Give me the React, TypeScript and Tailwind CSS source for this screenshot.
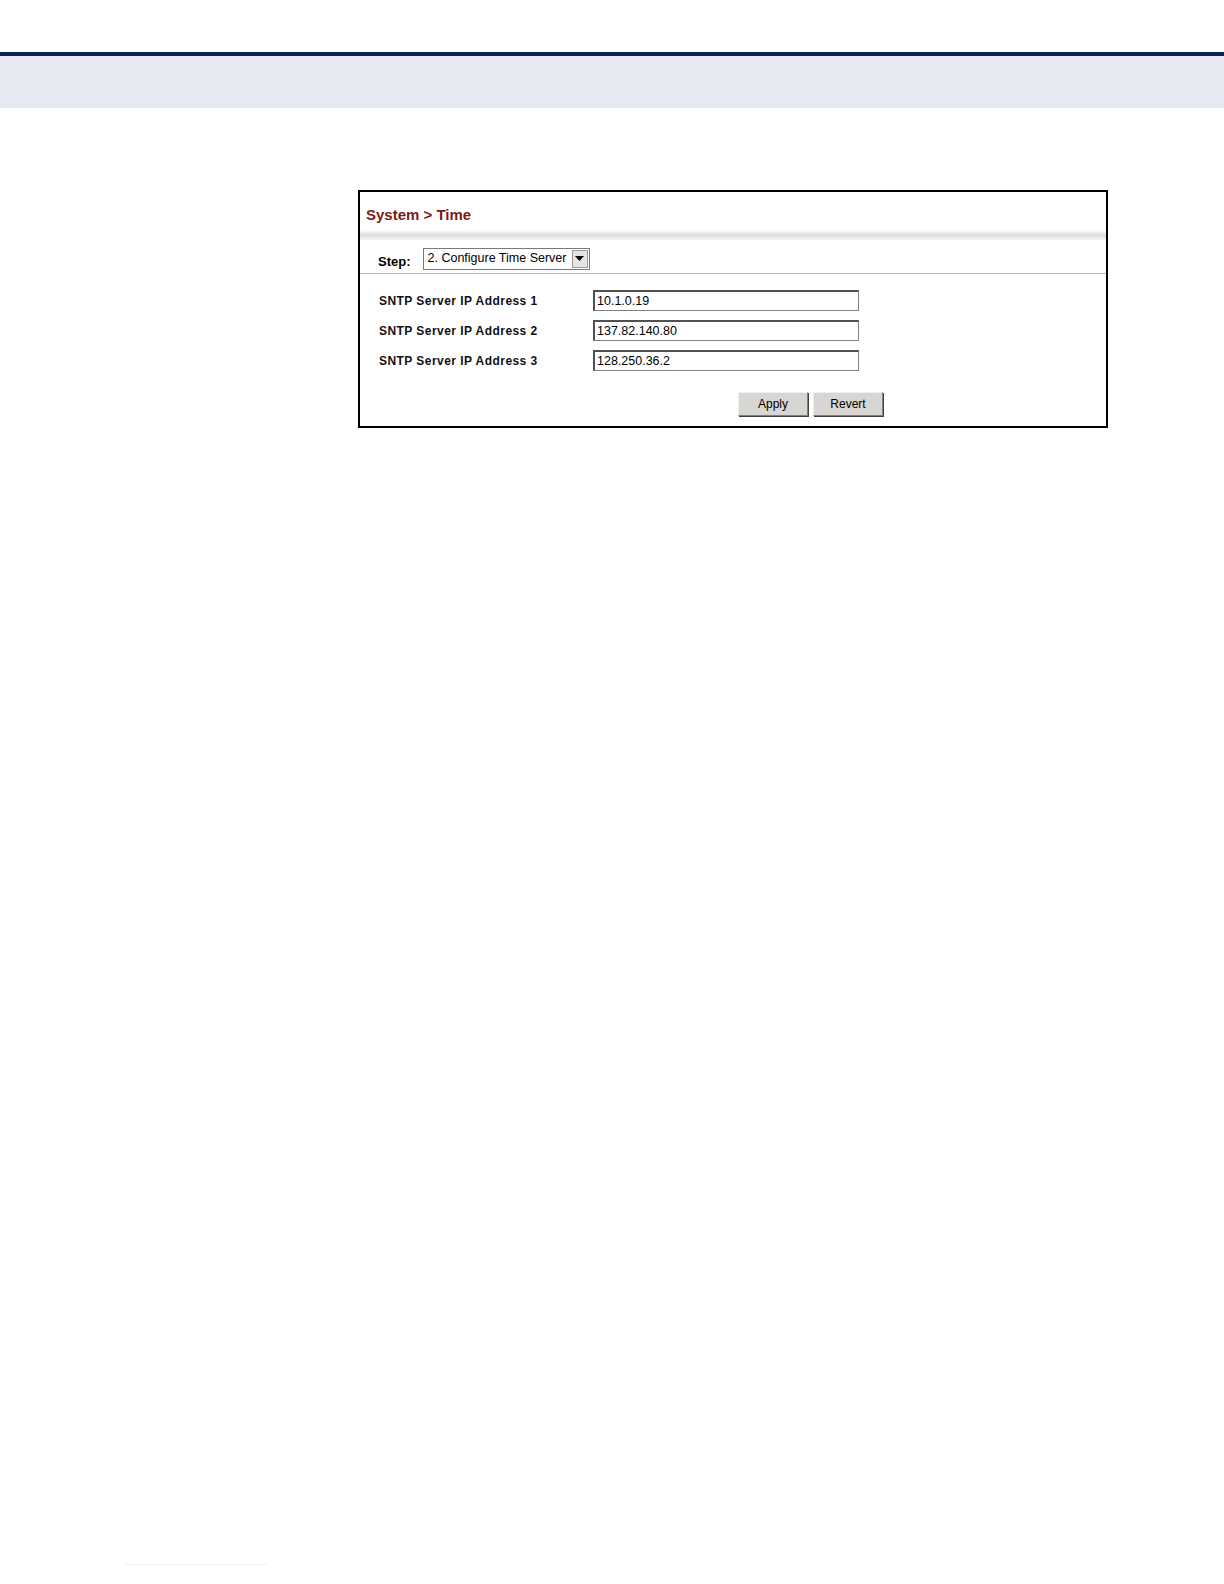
import React from 'react';

const SERVERS = [
  { label: 'SNTP Server IP Address 1', value: '10.1.0.19' },
  { label: 'SNTP Server IP Address 2', value: '137.82.140.80' },
  { label: 'SNTP Server IP Address 3', value: '128.250.36.2' },
];

export default function App() {
  return (
    <div className="w-[1224px] h-[1584px] bg-white relative" style={{ fontFamily: '"Liberation Sans", Arial, sans-serif' }}>
      {/* page header band */}
      <div className="h-[52px]" />
      <div className="h-[4px] bg-[#0b2457]" />
      <div className="h-[52px] bg-[#e6e9f1]" />

      {/* screenshot panel */}
      <div className="pt-[82px] pl-[358px]">
        <div className="w-[750px] h-[238px] border-2 border-black bg-white flex flex-col">
          <div className="pt-[14px] pl-[6px] text-[15px] font-bold text-[#7b1c1c] leading-[18px]">System &gt; Time</div>
          <div className="mt-[6px] h-[10px] bg-gradient-to-b from-[#ffffff] via-[#dcdcdc] to-[#f4f4f4]" />
          <div className="flex items-center h-[34px] pl-[18px] pt-[4px] border-b border-[#b4b4b4]">
            <span className="text-[13px] font-bold text-black mt-[6px]">Step:</span>
            <div className="ml-[12px] flex items-center h-[22px] w-[167px] border border-[#7a7a7a] bg-white">
              <span className="flex-1 pl-[4px] text-[12.5px] text-black leading-none whitespace-nowrap overflow-hidden">2. Configure Time Server</span>
              <div className="w-[16px] h-[18px] mr-[1px] bg-[#e4e4e4] border border-[#9a9a9a] flex items-center justify-center shrink-0">
                <svg width="9" height="5" viewBox="0 0 9 5"><path d="M0 0h9L4.5 5z" fill="#000" /></svg>
              </div>
            </div>
          </div>
          <div className="flex flex-col gap-[9px] pt-[16px]">
            {SERVERS.map((s) => (
              <div key={s.label} className="flex items-center h-[21px]">
                <span className="w-[233px] pl-[19px] text-[12px] font-bold text-[#111] tracking-[0.45px] whitespace-nowrap">{s.label}</span>
                <div className="w-[266px] h-[21px] border border-[#828282] border-t-2 border-l-2 border-t-[#505050] border-l-[#505050] bg-white flex items-center pl-[2px] text-[12.5px] text-black">
                  {s.value}
                </div>
              </div>
            ))}
          </div>
          <div className="flex gap-[5px] pl-[378px] pt-[21px]">
            <button className="w-[70px] h-[24px] bg-[#d8d6d2] border border-[#808080] border-t-[#f0f0f0] border-l-[#f0f0f0] shadow-[1px_1px_0_#404040] text-[12px] text-black">Apply</button>
            <button className="w-[70px] h-[24px] bg-[#d8d6d2] border border-[#808080] border-t-[#f0f0f0] border-l-[#f0f0f0] shadow-[1px_1px_0_#404040] text-[12px] text-black">Revert</button>
          </div>
        </div>
      </div>

      <div className="absolute left-[125px] top-[1564px] w-[142px] h-px bg-[#eef2f8]" />
    </div>
  );
}
